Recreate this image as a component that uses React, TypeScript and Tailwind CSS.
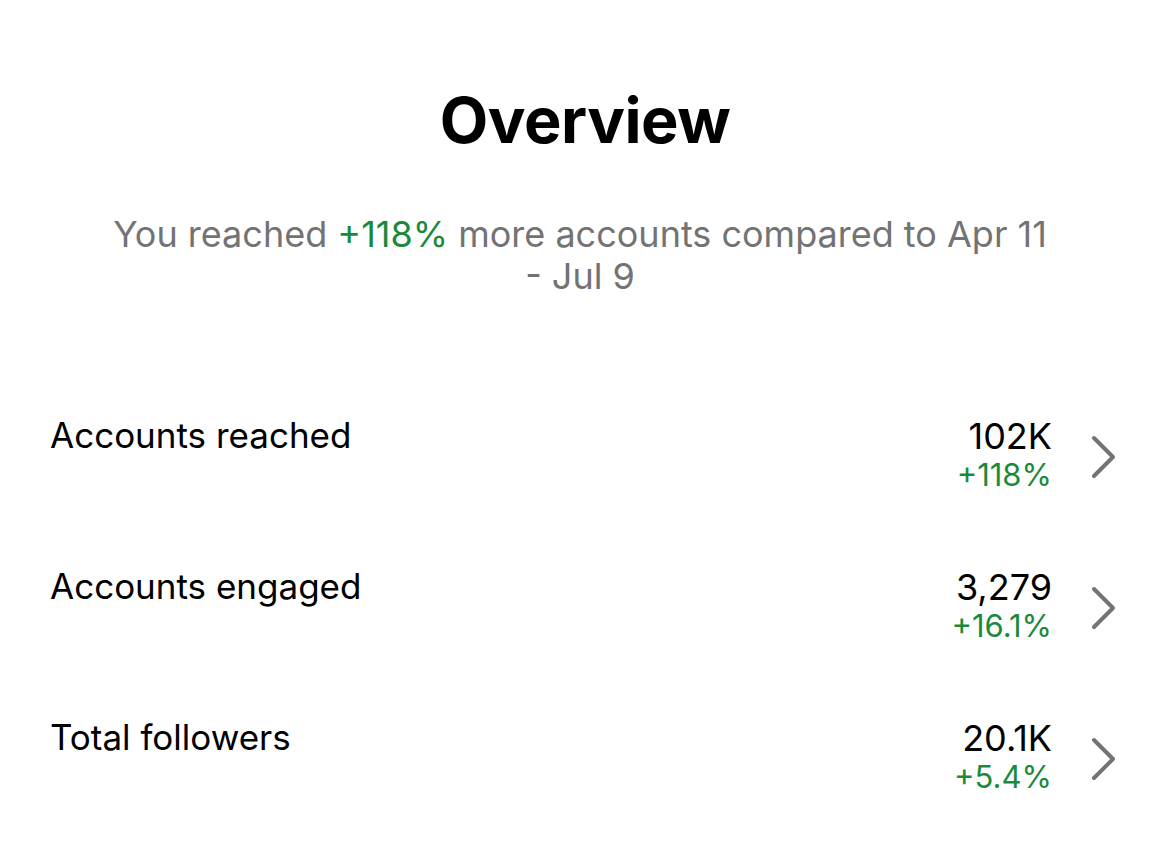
const rows = [
  { label: 'Accounts reached', value: '102K', change: '+118%' },
  { label: 'Accounts engaged', value: '3,279', change: '+16.1%' },
  { label: 'Total followers', value: '20.1K', change: '+5.4%' },
];

function Chevron() {
  return (
    <svg width="28" height="48" viewBox="0 0 28 48" className="ml-[38px] mt-[19px] shrink-0">
      <path
        d="M4 5 L23 24 L4 43"
        fill="none"
        stroke="#737373"
        strokeWidth="4"
        strokeLinecap="round"
        strokeLinejoin="round"
      />
    </svg>
  );
}

export default function App() {
  return (
    <div className="min-h-[848px] w-[1170px] bg-white font-['Inter',sans-serif] text-black">
      <div className="pt-[84px] text-center">
        <h1 className="text-[63px] font-bold leading-[72px] tracking-[-0.5px]">Overview</h1>
        <p className="mt-[57px] pr-[10px] text-[36px] leading-[42px] text-[#737373]">
          You reached <span className="text-[#1a8a3a]">+118%</span> more accounts compared to Apr 11
          <br />- Jul 9
        </p>
      </div>

      <div className="mt-[117px] pl-[50px] pr-[52px]">
        {rows.map((row) => (
          <div key={row.label} className="flex h-[151px] items-start">
            <div className="flex-1 text-[35px] leading-[42px]">{row.label}</div>
            <div className="pt-[2px] text-right">
              <div className="text-[36px] leading-[40px]">{row.value}</div>
              <div className="text-[31px] leading-[38px] text-[#1a8a3a]">{row.change}</div>
            </div>
            <Chevron />
          </div>
        ))}
      </div>
    </div>
  );
}
